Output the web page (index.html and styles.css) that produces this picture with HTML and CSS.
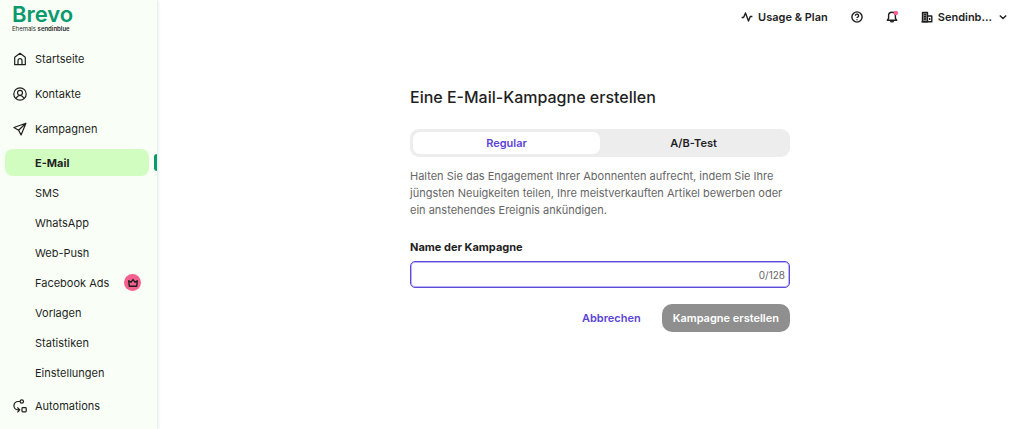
FILE: index.html
```
<!DOCTYPE html>
<html lang="de">
<head>
    <meta charset="UTF-8">
    <meta name="viewport" content="width=device-width, initial-scale=1.0">
    <title>Brevo - E-Mail-Kampagne erstellen</title>
    <link rel="stylesheet" href="styles.css">
</head>
<body>
    <aside class="sidebar">
        <a class="logo" href="#">
            <span class="logo-name">Brevo</span>
            <span class="logo-sub">Ehemals <b>sendinblue</b></span>
        </a>

        <nav class="nav">
            <a class="nav-item" href="#">
                <svg class="icon" viewBox="0 0 14 14"><path d="M1.700 5.200 7 1.300l5.300 3.900V12.700H1.700zM5 12.500V8.700a2 2 0 0 1 4 0v3.800"/></svg>
                Startseite
            </a>
            <a class="nav-item" href="#">
                <svg class="icon" viewBox="0 0 14 14"><circle cx="7" cy="7" r="6.200"/><circle cx="7" cy="5.800" r="2.500"/><path d="M3.200 11.600c.5-2 1.900-3.100 3.800-3.100s3.300 1.100 3.800 3.100"/></svg>
                Kontakte
            </a>
            <a class="nav-item" href="#">
                <svg class="icon" viewBox="0 0 14 14"><path d="M12.900 1.200.9 5.500l4.700 2.700 2.500 4.700zM12.900 1.200 5.600 8.200"/></svg>
                Kampagnen
            </a>

            <div class="subnav">
                <a class="subnav-item active" href="#">E-Mail</a>
                <a class="subnav-item" href="#">SMS</a>
                <a class="subnav-item" href="#">WhatsApp</a>
                <a class="subnav-item" href="#">Web-Push</a>
                <a class="subnav-item" href="#">
                    Facebook Ads
                    <span class="crown">
                        <svg viewBox="0 0 12 12"><path d="M1.700 3.800 3.900 5.200 6 2.600l2.100 2.600 2.200-1.400-.6 5.400H2.300z"/></svg>
                    </span>
                </a>
                <a class="subnav-item" href="#">Vorlagen</a>
                <a class="subnav-item" href="#">Statistiken</a>
                <a class="subnav-item" href="#">Einstellungen</a>
            </div>

            <a class="nav-item" href="#">
                <svg class="icon" viewBox="0 0 14 14"><circle cx="8.800" cy="2.500" r="1.700"/><path d="M7.100 2.500H5.200C2.800 2.500.9 4.300.9 6.600s1.700 4.300 4.100 4.300h1.600M4.400 8.500l2.400 2.400-2.400 2.400"/><rect x="9" y="8.700" width="4.200" height="4.200" rx=".8"/></svg>
                Automations
            </a>
        </nav>
    </aside>

    <div class="page">
        <header class="topbar">
            <a class="topbar-item" href="#">
                <svg class="icon" viewBox="0 0 12 12"><path d="M.6 6.500h2L4.500 2l3 8 1.800-4.500h2.100"/></svg>
                Usage &amp; Plan
            </a>
            <button class="topbar-item" type="button" aria-label="Hilfe">
                <svg class="icon" viewBox="0 0 12 12"><circle cx="6" cy="6" r="5.100"/><path d="M4.400 4.800a1.600 1.600 0 1 1 2.400 1.300c-.5.3-.8.500-.8 1M6 8.200v1"/></svg>
            </button>
            <button class="topbar-item" type="button" aria-label="Benachrichtigungen">
                <svg class="icon" viewBox="0 0 12 12"><path d="M1.300 9.200h9.400L9.400 7.300V4.600a3.400 3.400 0 0 0-6.800 0v2.700zM4.500 9.400a1.500 1.500 0 0 0 3 0"/><circle class="dot" cx="9.800" cy="2" r="2.200"/></svg>
            </button>
            <button class="topbar-item" type="button">
                <svg class="icon" viewBox="0 0 12 12"><path class="tower" d="M1.500 10.800V1.500h5v9.300z"/><path d="M6.500 5h4.300v5.800M.6 10.800h10.800M3 3.600h2M3 5.800h2M3 8h2M8.700 7v2"/></svg>
                Sendinb...
                <svg class="icon chevron" viewBox="0 0 12 12"><path d="M2.800 4.600 6 7.600l3.200-3"/></svg>
            </button>
        </header>

        <main class="content">
            <form class="campaign">
                <h1>Eine E-Mail-Kampagne erstellen</h1>

                <div class="tabs">
                    <button class="tab selected" type="button">Regular</button>
                    <button class="tab" type="button">A/B-Test</button>
                </div>

                <p>Halten Sie das Engagement Ihrer Abonnenten aufrecht, indem Sie Ihre jüngsten Neuigkeiten teilen, Ihre meistverkauften Artikel bewerben oder ein anstehendes Ereignis ankündigen.</p>

                <label for="name">Name der Kampagne</label>
                <div class="field">
                    <input id="name" type="text" maxlength="128">
                    <span class="counter">0/128</span>
                </div>

                <div class="actions">
                    <button class="link-button" type="button">Abbrechen</button>
                    <button class="submit" type="submit" disabled>Kampagne erstellen</button>
                </div>
            </form>
        </main>
    </div>
</body>
</html>
```
FILE: styles.css
```
* {
    box-sizing: border-box;
}
body {
    display: flex;
    min-height: 100vh;
    margin: 0;
    font-family: Inter, "Liberation Sans", sans-serif;
    font-size: 11px;
    color: #1f1f1f;
    background-color: #fff;
}
a {
    color: inherit;
    text-decoration: none;
}
button {
    padding: 0;
    border: none;
    background: none;
    font: inherit;
    color: inherit;
    cursor: pointer;
}
.icon {
    flex: none;
    width: 14px;
    height: 14px;
    fill: none;
    stroke: #1f1f1f;
    stroke-width: 1.2;
    stroke-linejoin: round;
}

/* Sidebar */
.sidebar {
    flex: none;
    width: 157px;
    background-color: #f9fff6;
    box-shadow: 1px 0 3px #dfe6e6;
}
.logo {
    display: flex;
    flex-direction: column;
    height: 41px;
    padding: 3px 0 0 12px;
}
.logo-name {
    font-size: 22px;
    line-height: 22px;
    font-weight: 600;
    color: #0b996e;
}
.logo-sub {
    font-size: 6px;
    line-height: 8px;
}
.logo-sub b {
    font-weight: 600;
}
.nav-item {
    display: flex;
    align-items: center;
    gap: 8px;
    height: 35px;
    padding-left: 13px;
}
.subnav {
    display: flex;
    flex-direction: column;
    gap: 3px;
    padding: 3px 8px 2px 5px;
}
.subnav-item {
    display: flex;
    align-items: center;
    gap: 15px;
    height: 27px;
    padding-left: 30px;
    border-radius: 8px;
}
.subnav-item.active {
    position: relative;
    font-weight: 700;
    background-color: #d2fdc0;
}
.subnav-item.active::after {
    content: "";
    position: absolute;
    top: 5px;
    right: -8px;
    width: 3px;
    height: 17px;
    border-radius: 3px 0 0 3px;
    background-color: #0b996e;
}
.crown {
    display: flex;
    align-items: center;
    justify-content: center;
    width: 17px;
    height: 17px;
    border-radius: 50%;
    background-color: #f4608f;
}
.crown svg {
    width: 12px;
    height: 12px;
    fill: none;
    stroke: #1f1f1f;
    stroke-width: 1.4;
    stroke-linejoin: round;
}

/* Top bar */
.page {
    flex: 1;
    min-width: 0;
}
.topbar {
    display: flex;
    justify-content: flex-end;
    gap: 23px;
    height: 34px;
    padding-right: 15px;
}
.topbar-item {
    display: flex;
    align-items: center;
    gap: 5px;
    font-weight: 600;
}
.topbar .icon {
    width: 12px;
    height: 12px;
    stroke-width: 1.4;
}
.topbar .dot {
    fill: #ff5a8c;
    stroke: none;
}
.topbar .tower {
    fill: #8a8a8a;
}

/* Campaign form */
.content {
    padding: 52px 16px 24px 35px;
}
.campaign {
    max-width: 380px;
    margin: 0 auto;
}
h1 {
    margin: 0 0 21px;
    font-size: 16px;
    line-height: 22px;
    font-weight: 500;
}
.tabs {
    display: flex;
    height: 28px;
    padding: 3px;
    border-radius: 9px;
    background-color: #ededed;
}
.tab {
    flex: 1;
    border-radius: 7px;
    font-weight: 600;
}
.tab.selected {
    color: #5b44d8;
    background-color: #fff;
}
p {
    margin: 11px 0 20px;
    line-height: 17px;
    color: #666;
}
label {
    display: block;
    line-height: 16px;
    font-weight: 700;
}
.field {
    display: flex;
    align-items: center;
    height: 27px;
    margin-top: 6px;
    padding: 0 4px;
    border: 1px solid #5b4adb;
    border-radius: 5px;
    box-shadow: inset 0 0 0 1px #b9b1f0;
}
.field input {
    flex: 1;
    min-width: 0;
    border: none;
    outline: none;
    background: none;
    font: inherit;
}
.counter {
    font-size: 10px;
    color: #666;
}
.actions {
    display: flex;
    justify-content: flex-end;
    gap: 21px;
    height: 28px;
    margin-top: 16px;
    font-weight: 600;
}
.link-button {
    color: #5b44d8;
}
.submit {
    padding: 0 11px;
    border-radius: 10px;
    color: #fff;
    background-color: #8f8f8f;
}
```
